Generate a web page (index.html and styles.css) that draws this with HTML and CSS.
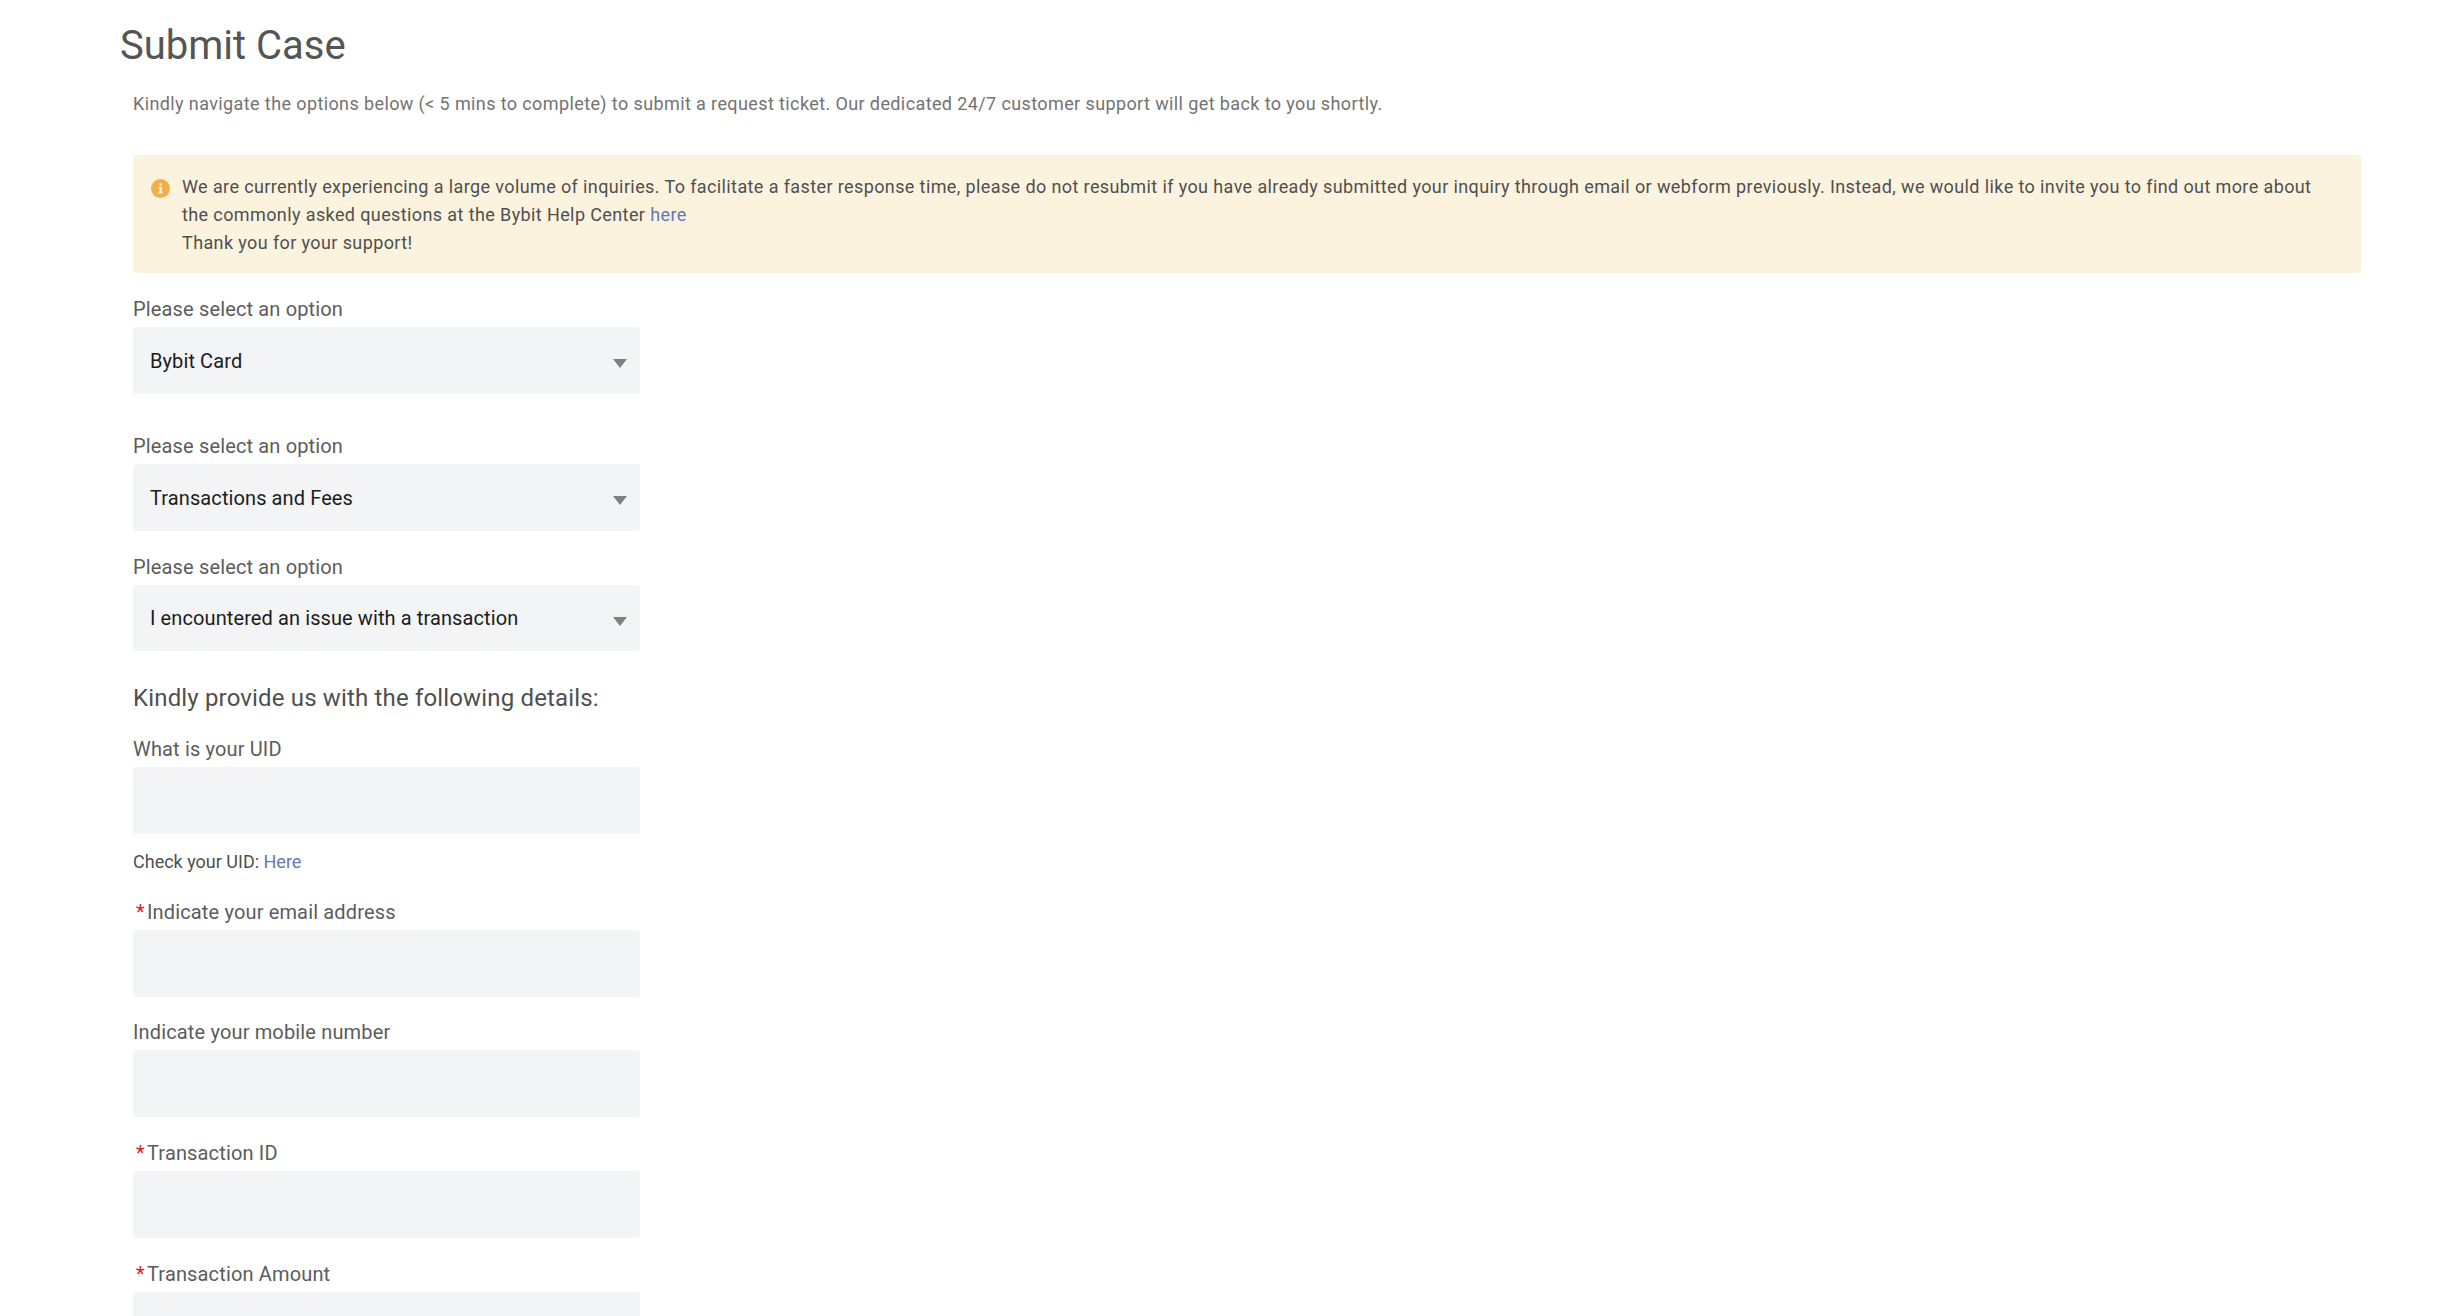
FILE: index.html
```html
<!DOCTYPE html>
<html lang="en">
<head>
<meta charset="utf-8">
<title>Submit Case</title>
<link rel="stylesheet" href="styles.css">
</head>
<body>
<main class="page">
  <h1 class="title">Submit Case</h1>
  <div class="content">
    <p class="intro">Kindly navigate the options below (&lt; 5 mins to complete) to submit a request ticket. Our dedicated 24/7 customer support will get back to you shortly.</p>
    <div class="notice">
      <svg class="notice-icon" viewBox="0 0 20 20" aria-hidden="true">
        <circle cx="10" cy="10" r="10" fill="#efb04a"/>
        <rect x="8.9" y="4.6" width="2.4" height="2.2" fill="#fcf3df"/>
        <path d="M7.9 8.2h3.4v5.6h1v1.4H7.9v-1.4h1v-4.2h-1z" fill="#fcf3df"/>
      </svg>
      <div class="notice-text">We are currently experiencing a large volume of inquiries. To facilitate a faster response time, please do not resubmit if you have already submitted your inquiry through email or webform previously. Instead, we would like to invite you to find out more about<br>the commonly asked questions at the Bybit Help Center <a class="link" href="#">here</a><br>Thank you for your support!</div>
    </div>

    <div class="field field-s1">
      <div class="label">Please select an option</div>
      <div class="control select"><span>Bybit Card</span><i class="caret"></i></div>
    </div>
    <div class="field field-s2">
      <div class="label">Please select an option</div>
      <div class="control select"><span>Transactions and Fees</span><i class="caret"></i></div>
    </div>
    <div class="field field-s3">
      <div class="label">Please select an option</div>
      <div class="control select control-short"><span>I encountered an issue with a transaction</span><i class="caret"></i></div>
    </div>

    <h2 class="section">Kindly provide us with the following details:</h2>

    <div class="field field-uid">
      <div class="label">What is your UID</div>
      <div class="control"></div>
      <div class="hint">Check your UID: <a class="link" href="#">Here</a></div>
    </div>
    <div class="field field-email">
      <div class="label"><span class="req">*</span>Indicate your email address</div>
      <div class="control"></div>
    </div>
    <div class="field field-mobile">
      <div class="label">Indicate your mobile number</div>
      <div class="control"></div>
    </div>
    <div class="field field-next">
      <div class="label"><span class="req">*</span>Transaction ID</div>
      <div class="control"></div>
    </div>
    <div class="field field-next">
      <div class="label"><span class="req">*</span>Transaction Amount</div>
      <div class="control"></div>
    </div>
  </div>
</main>
</body>
</html>
```
FILE: styles.css
```css
* { box-sizing: border-box; }
html, body { margin: 0; height: 100%; overflow: hidden; background: #fff; }
body { font-family: "Roboto", "Liberation Sans", sans-serif; color: #595959; }
.page { padding: 20px 97px 0 120px; }
.title { margin: 0; font-size: 40px; line-height: 51px; font-weight: 400; color: #555; }
.content { padding-left: 13px; }
.intro { margin: 19px 0 0; font-size: 18px; line-height: 28px; color: #737373; letter-spacing: 0.39px; }
.notice { display: flex; margin-top: 37px; height: 118px; padding: 18px 26px 0 18px; background: #fcf3df; border-radius: 4px; }
.notice-icon { flex: none; width: 19px; height: 19px; margin: 6px 12px 0 0; }
.notice-text { font-size: 18px; line-height: 28px; color: #4f4f4f; white-space: nowrap; letter-spacing: 0.39px; }
.link { color: #6676b5; text-decoration: none; }
.label { font-size: 20px; line-height: 28px; height: 28px; color: #5c5c5c; letter-spacing: 0.15px; }
.req { display: inline-block; width: 14px; padding-left: 3px; color: #e02020; }
.control { position: relative; display: flex; align-items: center; width: 507px; height: 67px; margin-top: 4px; padding: 0 17px; background: #f3f4f6; border-radius: 4px; font-size: 20px; color: #1c1c1c; letter-spacing: 0.1px; }
.control-short { height: 66px; }
.caret { position: absolute; right: 13px; top: 32px; width: 0; height: 0; border-left: 7.5px solid transparent; border-right: 7.5px solid transparent; border-top: 9px solid #808080; }
.field-s1 { margin-top: 22px; }
.field-s2 { margin-top: 38px; }
.field-s3 { margin-top: 22px; }
.section { margin: 29px 0 0; font-size: 24px; line-height: 36px; font-weight: 400; color: #4f4f4f; letter-spacing: 0.16px; }
.field-uid { margin-top: 19px; }
.hint { margin-top: 16px; font-size: 18px; line-height: 24px; color: #4f4f4f; }
.field-email { margin-top: 24px; }
.field-mobile { margin-top: 21px; }
.field-next { margin-top: 22px; }
```
